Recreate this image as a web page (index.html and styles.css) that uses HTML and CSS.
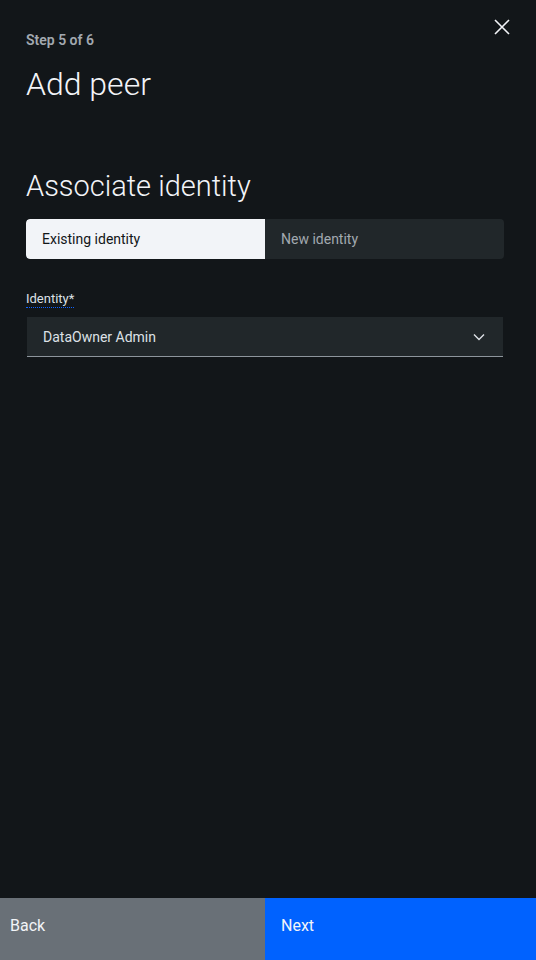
FILE: index.html
```html
<!DOCTYPE html>
<html lang="en">
<head>
<meta charset="utf-8">
<title>Add peer</title>
<link rel="stylesheet" href="styles.css">
</head>
<body>
<div class="panel">
  <header class="header">
    <div class="step">Step 5 of 6</div>
    <h1 class="title">Add peer</h1>
    <button class="close" aria-label="Close">
      <svg width="16" height="16" viewBox="0 0 16 16"><path d="M1 1L15 15M15 1L1 15" stroke="#f2f4f8" stroke-width="1.6" fill="none"/></svg>
    </button>
  </header>
  <main class="content">
    <h2 class="section-title">Associate identity</h2>
    <div class="tabs">
      <div class="tab tab-active">Existing identity</div>
      <div class="tab">New identity</div>
    </div>
    <div class="field">
      <label class="label">Identity*</label>
      <div class="select">
        <span class="select-value">DataOwner Admin</span>
        <svg class="chevron" width="12" height="8" viewBox="0 0 12 8"><path d="M1 1.5L6 6.5L11 1.5" stroke="#dde1e6" stroke-width="1.4" fill="none"/></svg>
      </div>
    </div>
  </main>
  <footer class="footer">
    <button class="btn btn-back">Back</button>
    <button class="btn btn-next">Next</button>
  </footer>
</div>
</body>
</html>
```
FILE: styles.css
```css
* { box-sizing: border-box; }
html, body { margin: 0; padding: 0; }
body {
  background: #121619;
  font-family: Roboto, "Liberation Sans", sans-serif;
  color: #f2f4f8;
}
.panel {
  height: 960px;
  display: flex;
  flex-direction: column;
}
.header {
  position: relative;
  padding: 31px 32px 0 26px;
}
.step {
  font-size: 14px;
  line-height: 18px;
  font-weight: 600;
  color: #a2a9b0;
}
.title {
  margin: 15px 0 0;
  font-size: 32px;
  line-height: 40px;
  font-weight: 300;
  color: #f2f4f8;
}
.close {
  position: absolute;
  top: 19px;
  right: 26px;
  width: 16px;
  height: 16px;
  padding: 0;
  border: 0;
  background: none;
  display: flex;
}
.content {
  flex: 1;
  padding: 64px 32px 0 26px;
}
.section-title {
  margin: 0;
  font-size: 29px;
  line-height: 36px;
  font-weight: 300;
  color: #f2f4f8;
}
.tabs {
  margin-top: 15px;
  display: grid;
  grid-template-columns: 1fr 1fr;
  height: 40px;
  border-radius: 4px;
  background: #21272a;
  overflow: hidden;
}
.tab {
  display: flex;
  align-items: center;
  padding-left: 16px;
  font-size: 14px;
  color: #a2a9b0;
}
.tab-active {
  background: #f2f4f8;
  color: #121619;
  border-radius: 4px 0 0 4px;
}
.field {
  margin-top: 29px;
  padding: 0 1px;
}
.label {
  display: inline-block;
  margin-left: -1px;
  font-size: 13px;
  line-height: 16px;
  color: #dde1e6;
  border-bottom: 1px dotted #0f62fe;
}
.select {
  margin-top: 9px;
  height: 40px;
  background: #21272a;
  border-bottom: 1px solid #8d959c;
  display: flex;
  align-items: center;
  justify-content: space-between;
  padding: 0 18px 0 16px;
}
.select-value {
  font-size: 14px;
  color: #dde1e6;
}
.footer {
  display: grid;
  grid-template-columns: 265px 1fr;
  height: 62px;
}
.btn {
  border: 0;
  margin: 0;
  font-family: inherit;
  font-size: 16px;
  color: #f2f4f8;
  text-align: left;
  padding: 0 0 8px 10px;
}
.btn-back { background: #697077; }
.btn-next { background: #0062ff; padding-left: 16px; }
```
